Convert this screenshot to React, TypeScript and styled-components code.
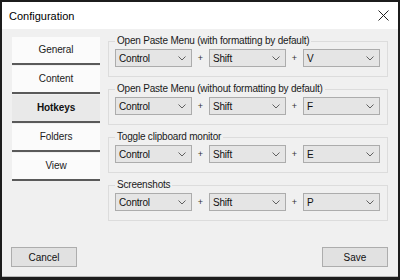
import styled, { createGlobalStyle } from "styled-components";

const GlobalStyle = createGlobalStyle`
  html, body {
    margin: 0;
    padding: 0;
    background: #ffffff;
  }
  * {
    box-sizing: border-box;
  }
`;

const tabs = ["General", "Content", "Hotkeys", "Folders", "View"];

const hotkeys = [
  { title: "Open Paste Menu (with formatting by default)", key: "V" },
  { title: "Open Paste Menu (without formatting by default)", key: "F" },
  { title: "Toggle clipboard monitor", key: "E" },
  { title: "Screenshots", key: "P" },
];

const Window = styled.div`
  width: 400px;
  height: 280px;
  display: flex;
  flex-direction: column;
  border: 2px solid #1c1c1c;
  border-bottom-width: 3px;
  background: #f0f0f0;
  font-family: "Liberation Sans", Arial, sans-serif;
  color: #1a1a1a;
  overflow: hidden;
`;

const TitleBar = styled.div`
  height: 27px;
  flex: none;
  display: flex;
  align-items: center;
  justify-content: space-between;
  padding: 0 9px 0 7px;
  background: #ffffff;
  font-size: 11px;
  color: #000;
`;

const Body = styled.div`
  flex: 1;
  display: flex;
  flex-direction: column;
  padding: 6px 10px 9px 9px;
  border-bottom: 1px solid #b8b8b8;
`;

const Main = styled.div`
  display: flex;
  gap: 8px;
`;

const TabList = styled.div`
  width: 88px;
  margin: 2px 0 0 1px;
  display: flex;
  flex-direction: column;
  gap: 1px;
`;

const Tab = styled.div<{ active?: boolean }>`
  height: 28px;
  display: flex;
  align-items: center;
  justify-content: center;
  padding-bottom: 2px;
  font-size: 10px;
  letter-spacing: -0.1px;
  font-weight: ${(p) => (p.active ? 700 : 400)};
  color: ${(p) => (p.active ? "#111" : "#222")};
  background: ${(p) => (p.active ? "#e9e9e9" : "#fbfbfb")};
  border-bottom: 2px solid #5a5a5a;
`;

const Groups = styled.div`
  flex: 1;
  display: flex;
  flex-direction: column;
  gap: 6px;
`;

const Group = styled.fieldset`
  margin: 0;
  padding: 2px 6px 9px 6px;
  border: 1px solid #dcdcdc;
  min-inline-size: 0;
`;

const Legend = styled.legend`
  padding: 0 2px;
  font-size: 10px;
  line-height: 12px;
  letter-spacing: -0.2px;
  color: #1a1a1a;
`;

const Row = styled.div`
  display: flex;
  align-items: center;
  padding-right: 1px;
`;

const Combo = styled.div`
  flex: 1;
  height: 18px;
  display: flex;
  align-items: center;
  justify-content: space-between;
  padding: 0 5px 0 3px;
  background: #e5e5e5;
  border: 1px solid #acacac;
  font-size: 10px;
  letter-spacing: -0.2px;
  color: #111;
`;

const Plus = styled.span`
  width: 17px;
  flex: none;
  text-align: center;
  font-size: 9px;
  color: #333;
`;

const Footer = styled.div`
  margin-top: auto;
  display: flex;
  justify-content: space-between;
`;

const Button = styled.div`
  width: 66px;
  height: 20px;
  display: flex;
  align-items: center;
  justify-content: center;
  background: #e1e1e1;
  border: 1px solid #adadad;
  font-size: 10px;
  color: #111;
`;

function Chevron() {
  return (
    <svg width="8" height="5" viewBox="0 0 8 5">
      <path d="M0.5 0.5 L4 4 L7.5 0.5" fill="none" stroke="#606060" strokeWidth="1" />
    </svg>
  );
}

function CloseIcon() {
  return (
    <svg width="11" height="11" viewBox="0 0 11 11">
      <path d="M0.5 0.5 L10.5 10.5 M10.5 0.5 L0.5 10.5" stroke="#222" strokeWidth="1" />
    </svg>
  );
}

function KeyCombo({ value }: { value: string }) {
  return (
    <Combo>
      <span>{value}</span>
      <Chevron />
    </Combo>
  );
}

function App() {
  return (
    <>
      <GlobalStyle />
      <Window>
        <TitleBar>
          <span>Configuration</span>
          <CloseIcon />
        </TitleBar>
        <Body>
          <Main>
            <TabList>
              {tabs.map((t) => (
                <Tab key={t} active={t === "Hotkeys"}>
                  {t}
                </Tab>
              ))}
            </TabList>
            <Groups>
              {hotkeys.map((h) => (
                <Group key={h.title}>
                  <Legend>{h.title}</Legend>
                  <Row>
                    <KeyCombo value="Control" />
                    <Plus>+</Plus>
                    <KeyCombo value="Shift" />
                    <Plus>+</Plus>
                    <KeyCombo value={h.key} />
                  </Row>
                </Group>
              ))}
            </Groups>
          </Main>
          <Footer>
            <Button>Cancel</Button>
            <Button>Save</Button>
          </Footer>
        </Body>
      </Window>
    </>
  );
}

export default App;
